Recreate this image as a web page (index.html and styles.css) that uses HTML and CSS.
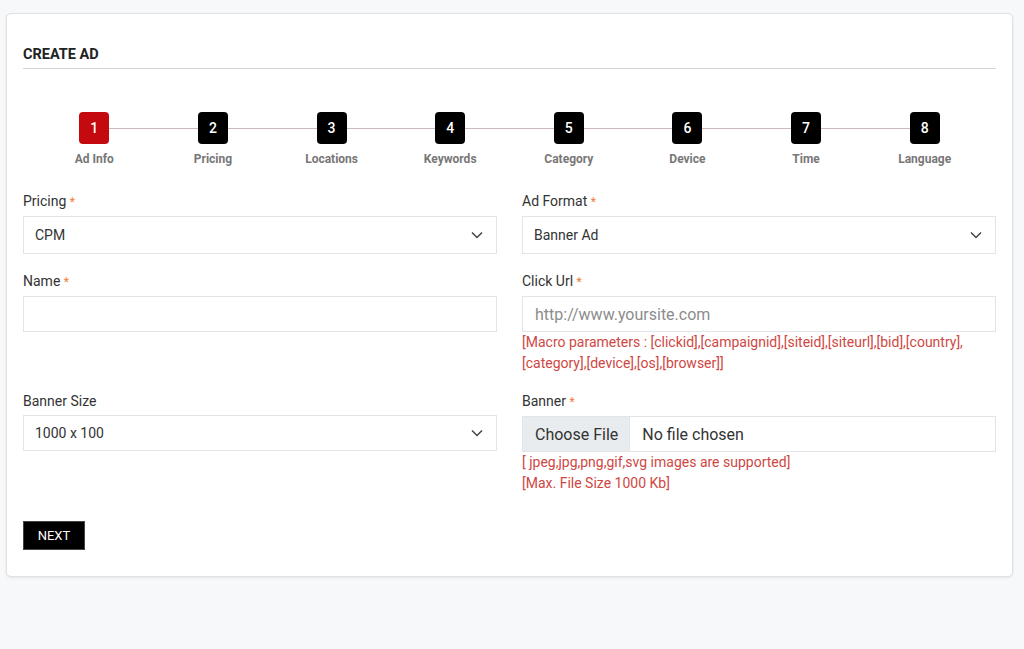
FILE: index.html
```html
<!DOCTYPE html>
<html lang="en">
<head>
    <meta charset="UTF-8">
    <meta name="viewport" content="width=device-width, initial-scale=1.0">
    <title>Create Ad</title>
    <link rel="stylesheet" href="styles.css">
</head>
<body>
    <div class="card">
        <h4 class="card-title">CREATE AD</h4>

        <div class="steps">
            <div class="step active"><span class="step-num">1</span><span class="step-label">Ad Info</span></div>
            <div class="step"><span class="step-num">2</span><span class="step-label">Pricing</span></div>
            <div class="step"><span class="step-num">3</span><span class="step-label">Locations</span></div>
            <div class="step"><span class="step-num">4</span><span class="step-label">Keywords</span></div>
            <div class="step"><span class="step-num">5</span><span class="step-label">Category</span></div>
            <div class="step"><span class="step-num">6</span><span class="step-label">Device</span></div>
            <div class="step"><span class="step-num">7</span><span class="step-label">Time</span></div>
            <div class="step"><span class="step-num">8</span><span class="step-label">Language</span></div>
        </div>

        <form class="ad-form">
            <div class="field">
                <label>Pricing <span class="req">*</span></label>
                <div class="select">CPM</div>
            </div>
            <div class="field">
                <label>Ad Format <span class="req">*</span></label>
                <div class="select">Banner Ad</div>
            </div>

            <div class="field">
                <label>Name <span class="req">*</span></label>
                <input class="input" type="text">
            </div>
            <div class="field">
                <label>Click Url <span class="req">*</span></label>
                <input class="input url" type="text" placeholder="http://www.yoursite.com">
                <p class="help">[Macro parameters : [clickid],[campaignid],[siteid],[siteurl],[bid],[country],<br>[category],[device],[os],[browser]]</p>
            </div>

            <div class="field">
                <label>Banner Size</label>
                <div class="select small">1000 x 100</div>
            </div>
            <div class="field">
                <label>Banner <span class="req">*</span></label>
                <div class="file">
                    <span class="file-btn">Choose File</span>
                    <span class="file-name">No file chosen</span>
                </div>
                <p class="help">[ jpeg,jpg,png,gif,svg images are supported]<br>[Max. File Size 1000 Kb]</p>
            </div>
        </form>

        <button class="btn-next" type="button">NEXT</button>
    </div>
</body>
</html>
```

FILE: styles.css
```css
body {
    margin: 0;
    background-color: #f7f8fa;
    font-family: Roboto, "Liberation Sans", sans-serif;
    color: #333;
}

.card {
    margin: 13px 11px 73px 6px;
    background-color: #fff;
    border: 1px solid #dfe1e4;
    border-radius: 5px;
    box-shadow: 0 1px 3px rgba(0, 0, 0, 0.08);
    padding: 31px 16px 26px 16px;
}

.card-title {
    margin: 0;
    font-size: 14.5px;
    line-height: 20px;
    font-weight: 700;
    color: #222;
    padding-bottom: 3px;
    border-bottom: 1px solid #d9d2d2;
}

/* Wizard steps */
.steps {
    display: flex;
    margin: 43px 12px 0 12px;
}

.step {
    flex: 1;
    display: flex;
    flex-direction: column;
    align-items: center;
    position: relative;
}

.step::after {
    content: "";
    position: absolute;
    top: 16px;
    left: 50%;
    width: 100%;
    height: 1px;
    background-color: #cdb9b9;
}

.step:last-child::after {
    display: none;
}

.step-num {
    position: relative;
    z-index: 1;
    width: 30px;
    height: 32px;
    border-radius: 4px;
    background-color: #000;
    color: #fff;
    font-size: 14px;
    font-weight: 500;
    display: flex;
    justify-content: center;
    align-items: center;
}

.step.active .step-num {
    background-color: #c4090f;
}

.step-label {
    margin-top: 7px;
    font-size: 12px;
    line-height: 16px;
    font-weight: 700;
    color: #777;
}

/* Form */
.ad-form {
    display: grid;
    grid-template-columns: 1fr 1fr;
    column-gap: 25px;
    row-gap: 17px;
    margin-top: 24px;
    align-items: start;
}

.field label {
    display: block;
    font-size: 14px;
    line-height: 20px;
    color: #333;
    margin-bottom: 4px;
}

.req {
    color: #f27a3a;
    font-size: 12px;
}

.select,
.input,
.file {
    box-sizing: border-box;
    width: 100%;
    height: 38px;
    border: 1px solid #e2e5e8;
    background-color: #fff;
    font-family: inherit;
    font-size: 14px;
    color: #333;
}

.select {
    display: flex;
    align-items: center;
    padding: 0 11px;
    background-image: url("data:image/svg+xml,%3Csvg xmlns='http://www.w3.org/2000/svg' width='12' height='8' viewBox='0 0 12 8'%3E%3Cpath d='M1 1.5l5 5 5-5' fill='none' stroke='%23444' stroke-width='1.5'/%3E%3C/svg%3E");
    background-repeat: no-repeat;
    background-position: right 13px center;
}

.select.small {
    height: 36px;
}

.input {
    display: block;
    height: 36px;
    padding: 0 12px;
    outline: none;
}

.input.url {
    font-size: 16px;
}

.input::placeholder {
    color: #8c8c8c;
}

.file {
    display: flex;
    align-items: stretch;
    height: 36px;
    font-size: 16px;
}

.file-btn {
    display: flex;
    align-items: center;
    padding: 0 11px 0 12px;
    background-color: #e9ecef;
    border-right: 1px solid #e2e5e8;
}

.file-name {
    display: flex;
    align-items: center;
    padding-left: 12px;
}

.help {
    margin: 0;
    font-size: 14px;
    line-height: 21px;
    color: #cf4743;
}

.btn-next {
    margin-top: 27px;
    width: 62px;
    height: 29px;
    background-color: #000;
    color: #fff;
    border: 1px solid #444;
    font-family: inherit;
    font-size: 13px;
    font-weight: 400;
    cursor: pointer;
}
```
